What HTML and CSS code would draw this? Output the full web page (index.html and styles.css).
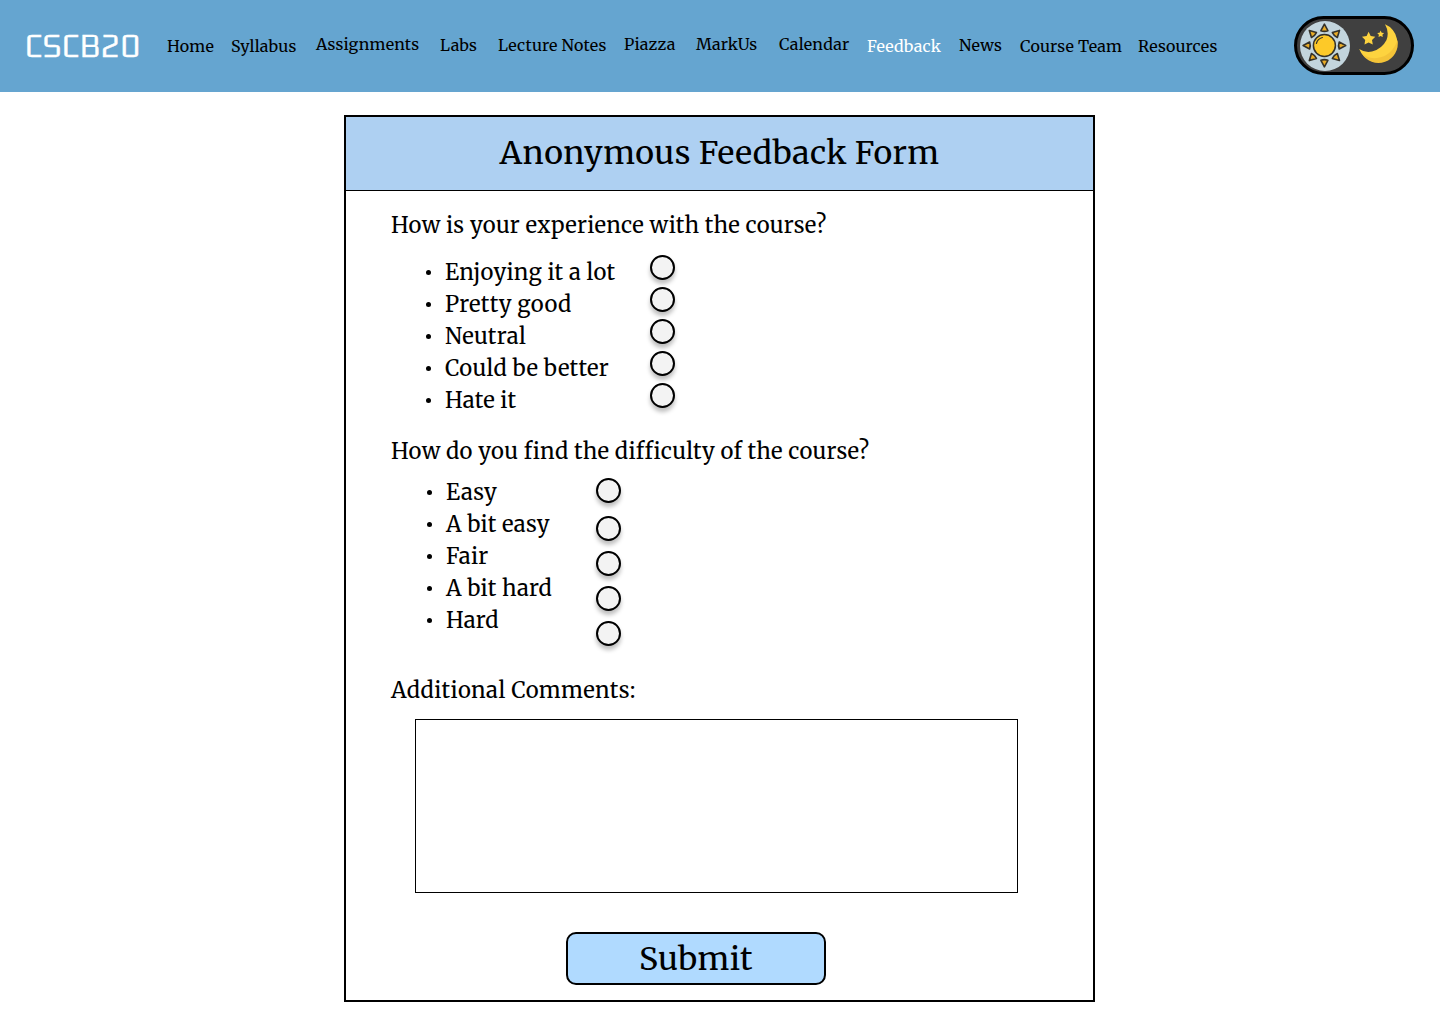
FILE: index.html
```html
<!DOCTYPE html>
<html lang="en">
<head>
<meta charset="utf-8">
<title>CSCB20 – Anonymous Feedback</title>
<link rel="stylesheet" href="styles.css">
</head>
<body>
<header class="navbar">
  <a class="logo">CSCB20</a>
  <nav class="links">
    <a class="low">Home</a>
    <a class="low">Syllabus</a>
    <a>Assignments</a>
    <a class="mid">Labs</a>
    <a class="mid">Lecture Notes</a>
    <a>Piazza</a>
    <a>MarkUs</a>
    <a>Calendar</a>
    <a class="low active">Feedback</a>
    <a class="mid">News</a>
    <a class="low">Course Team</a>
    <a class="low">Resources</a>
  </nav>
  <svg class="toggle" viewBox="0 0 120 59" width="120" height="59">
    <defs>
      <path id="r" d="M0-21.3 3.500-14.800Q0-13.500-3.500-14.800Z" fill="#e9ab26" stroke="#35322a" stroke-width="1.6" stroke-linejoin="round"/>
    </defs>
    <rect x="1.5" y="1.5" width="117" height="56" rx="28" fill="#404040" stroke="#000" stroke-width="3"/>
    <circle cx="31" cy="30" r="25" fill="#c3d5dd"/>
    <g transform="translate(30.4 29.5)">
      <use href="#r"/><use href="#r" transform="rotate(45)"/><use href="#r" transform="rotate(90)"/><use href="#r" transform="rotate(135)"/><use href="#r" transform="rotate(180)"/><use href="#r" transform="rotate(225)"/><use href="#r" transform="rotate(270)"/><use href="#r" transform="rotate(315)"/>
      <circle r="11" fill="#fdc928" stroke="#35322a" stroke-width="1.5"/>
      <path d="M-8-2A8.3 8.3 0 0 1-2-8" fill="none" stroke="#35322a" stroke-width="1.2" stroke-linecap="round"/>
    </g>
    <path d="M91 8.200A19.600 19.600 0 1 1 65.200 33Q71 37 78 35.500Q88 33 92.500 24Q95.500 16 91 8.200Z" fill="#fdd33f"/>
    <path d="M103.500 24A19.400 19.400 0 0 1 67.500 37Q73 43 83 42Q98 40 103.500 24Z" fill="#f3c338"/>
    <path d="M74.600 15.800 76.700 20 81.300 20.700 78 24 78.800 28.600 74.600 26.500 70.500 28.600 71.200 24 68 20.700 72.600 20Z" fill="#fdd33f"/>
    <path d="M86.600 14.500 87.700 16.700 90.100 17 88.400 18.700 88.800 21.100 86.600 20 84.500 21.100 84.900 18.700 83.200 17 85.600 16.700Z" fill="#fdd33f"/>
  </svg>
</header>
<main class="form">
  <h1>Anonymous Feedback Form</h1>
  <h2>How is your experience with the course?</h2>
  <div class="question experience">
    <ul><li>Enjoying it a lot</li><li>Pretty good</li><li>Neutral</li><li>Could be better</li><li>Hate it</li></ul>
    <div class="radios"><i></i><i></i><i></i><i></i><i></i></div>
  </div>
  <h2>How do you find the difficulty of the course?</h2>
  <div class="question difficulty">
    <ul><li>Easy</li><li>A bit easy</li><li>Fair</li><li>A bit hard</li><li>Hard</li></ul>
    <div class="radios"><i></i><i></i><i></i><i></i><i></i></div>
  </div>
  <h2>Additional Comments:</h2>
  <div class="comments"></div>
  <div class="submit">Submit</div>
</main>
</body>
</html>
```
FILE: styles.css
```css
* { box-sizing: border-box; letter-spacing: .0125em; }
body { margin: 0; background: #fff; color: #000; font-family: Merriweather, "Noto Serif", "DejaVu Serif Condensed", serif; font-weight: 400; }
.navbar { display: flex; height: 92px; background: #65a5d0; }
.logo { width: 167px; padding: 25px 0 0 25px; color: #fff; font: 300 35px/40px "Gemunu Libre", Rajdhani, Roboto, sans-serif; letter-spacing: .8px; transform: scaleX(1.12); transform-origin: 25px 0; -webkit-text-stroke: .4px #fff; }
.links { display: grid; grid-template-columns: 64px 85px 124px 58px 126px 72px 83px 88px 92px 61px 118px 156px; padding-top: 34px; font-size: 16px; line-height: 20px; white-space: nowrap; }
.mid { padding-top: 1px; }
.low { padding-top: 2px; }
.active { color: #fff; }
.toggle { margin-top: 16px; }
.form { width: 751px; height: 887px; margin: 23px 0 0 344px; border: 2px solid #000; }
h1 { margin: 0; height: 74px; border-bottom: 1px solid #000; background: #aed0f2; font-size: 32px; font-weight: inherit; line-height: 72px; text-align: center; }
h2 { margin: 18px 0 0 45px; font-size: 22px; font-weight: inherit; line-height: 32px; }
.question { display: flex; font-size: 22px; line-height: 32px; }
.experience { height: 194px; padding: 15px 0 0 80px; }
.difficulty { height: 189px; padding: 9px 0 0 81px; }
ul { margin: 0; padding: 0; list-style: none; }
.experience ul { width: 224px; }
.difficulty ul { width: 169px; }
li { display: flex; align-items: center; }
li::before { content: ""; width: 5px; height: 5px; margin-right: 14px; border-radius: 50%; background: #000; }
.radios { display: flex; flex-direction: column; gap: 7px; margin-top: -1px; }
.difficulty .radios { gap: 10px; margin-top: 2px; }
.radios i { width: 25px; height: 25px; border: 2px solid #000; border-radius: 50%; background: #f3f3f3; box-shadow: 0 4px 4px rgba(0, 0, 0, .25); }
.difficulty .radios i:first-child { margin-bottom: 3px; }
.difficulty + h2 { margin-top: 18px; letter-spacing: .017em; }
.experience + h2 { margin-top: 0; }
.comments { width: 603px; height: 174px; margin: 13px 0 0 69px; border: 1px solid #000; }
.submit { width: 260px; height: 53px; margin: 39px 0 0 220px; border: 2px solid #000; border-radius: 10px; background: #b0daff; font-size: 32px; line-height: 50px; text-align: center; }
```
